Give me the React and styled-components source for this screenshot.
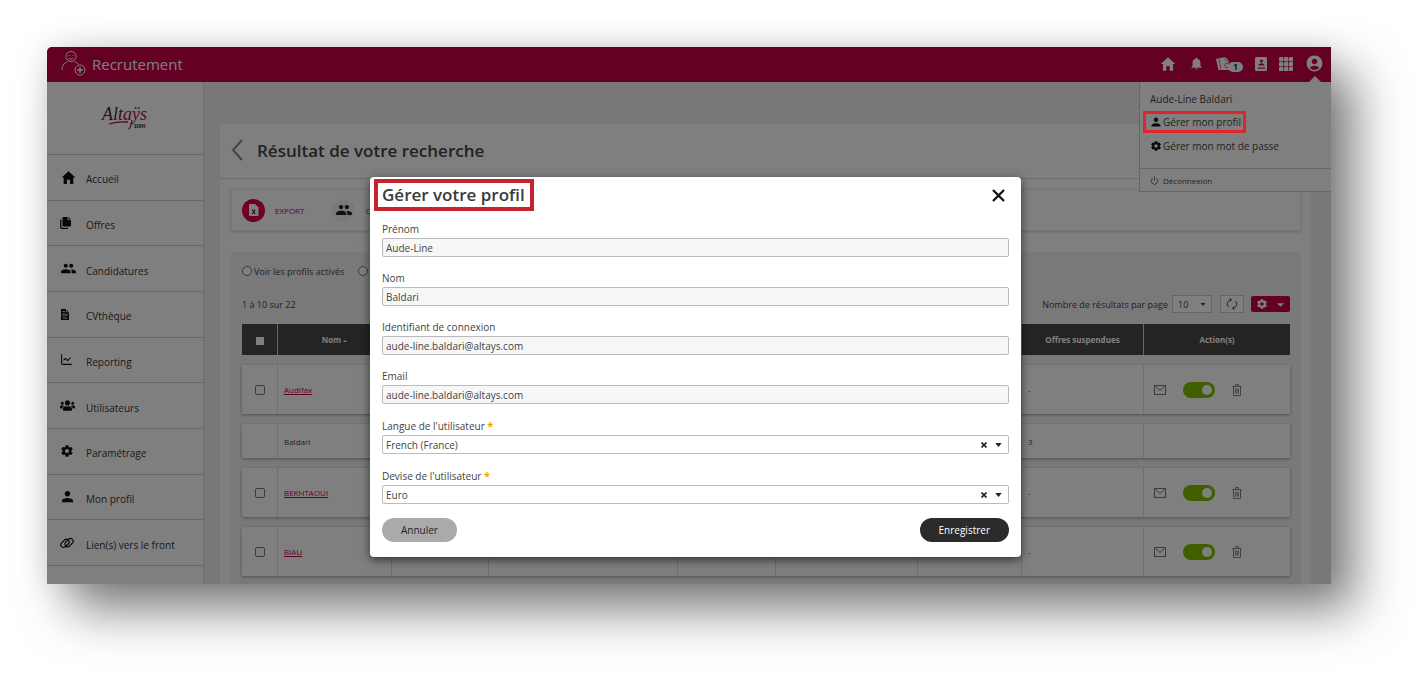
import styled, { createGlobalStyle } from "styled-components";
import {
  IoMdHome,
  IoMdPeople,
  IoMdPerson,
  IoMdSettings,
  IoMdNotifications,
} from "react-icons/io";
import { MdAccountCircle } from "react-icons/md";
import { FaUsers, FaCaretDown } from "react-icons/fa";
import { LuChartLine, LuPower } from "react-icons/lu";

const MENU = [
  { label: "Accueil", icon: <IoMdHome size={17} /> },
  { label: "Offres", icon: <FilesIcon /> },
  { label: "Candidatures", icon: <IoMdPeople size={17} /> },
  { label: "CVthèque", icon: <CvIcon /> },
  { label: "Reporting", icon: <LuChartLine size={13} /> },
  { label: "Utilisateurs", icon: <FaUsers size={15} /> },
  { label: "Paramétrage", icon: <IoMdSettings size={14} /> },
  { label: "Mon profil", icon: <IoMdPerson size={15} /> },
  { label: "Lien(s) vers le front", icon: <ChainIcon /> },
];

const COLUMNS = [35, 114, 97, 189, 98, 142, 104, 122, 147];

const USERS = [
  { name: "Audifax", suspended: "-", editable: true },
  { name: "Baldari", suspended: "3", editable: false },
  { name: "BEKHTAOUI", suspended: "-", editable: true },
  { name: "BIAU", suspended: "-", editable: true },
];

const READONLY_FIELDS = [
  { id: "prenom", label: "Prénom", value: "Aude-Line" },
  { id: "nom", label: "Nom", value: "Baldari" },
  { id: "login", label: "Identifiant de connexion", value: "aude-line.baldari@altays.com" },
  { id: "email", label: "Email", value: "aude-line.baldari@altays.com" },
];

const SELECT_FIELDS = [
  { id: "langue", label: "Langue de l'utilisateur", value: "French (France)" },
  { id: "devise", label: "Devise de l'utilisateur", value: "Euro" },
];

export default function App() {
  return (
    <Page>
      <GlobalStyle />
      <Frame>
        <TopBar />
        <Body>
          <Sidebar />
          <Results />
        </Body>
        <Backdrop>
          <ProfileDialog />
        </Backdrop>
      </Frame>
    </Page>
  );
}

function TopBar() {
  return (
    <Header>
      <RecruitIcon />
      <Brand>Recrutement</Brand>
      <Tools>
        <ToolButton aria-label="Accueil"><IoMdHome size={18} /></ToolButton>
        <ToolButton aria-label="Notifications"><IoMdNotifications size={15} /></ToolButton>
        <ToolButton aria-label="Documents">
          <DocsIcon />
          <Badge>1</Badge>
        </ToolButton>
        <ToolButton aria-label="Annuaire"><BookIcon /></ToolButton>
        <ToolButton aria-label="Applications"><GridIcon /></ToolButton>
        <ToolButton aria-label="Compte" $open><MdAccountCircle size={19} /></ToolButton>
      </Tools>
      <UserMenu>
        <UserName>Aude-Line Baldari</UserName>
        <MenuLink href="#profil"><IoMdPerson size={12} />Gérer mon profil<Outline /></MenuLink>
        <MenuLink href="#mdp"><IoMdSettings size={12} />Gérer mon mot de passe</MenuLink>
        <LogoutLink href="#logout"><LuPower size={9} />Déconnexion</LogoutLink>
      </UserMenu>
    </Header>
  );
}

function Sidebar() {
  return (
    <Side>
      <LogoBox><AltaysLogo /></LogoBox>
      <Nav>
        {MENU.map((item) => (
          <NavLink href="#" key={item.label}>
            <NavIcon>{item.icon}</NavIcon>
            <span>{item.label}</span>
          </NavLink>
        ))}
      </Nav>
    </Side>
  );
}

function Results() {
  return (
    <Main>
      <Panel>
        <PanelHead>
          <BackButton aria-label="Retour">
            <svg width="12" height="22" viewBox="0 0 12 22" fill="none" stroke="currentColor" strokeWidth="2">
              <path d="M11 1 2 11l9 10" />
            </svg>
          </BackButton>
          <h1>Résultat de votre recherche</h1>
        </PanelHead>
        <PanelBody>
          <Toolbar>
            <ToolbarButton>
              <Round $active><ExcelIcon /></Round>
              EXPORT
            </ToolbarButton>
            <ToolbarButton>
              <Round><IoMdPeople size={18} /></Round>
              CRÉER
            </ToolbarButton>
          </Toolbar>
          <ListArea>
            <Filters>
              <label><input type="radio" name="etat" />Voir les profils activés</label>
              <input type="radio" name="etat" aria-label="Voir les profils désactivés" />
            </Filters>
            <ListBar>
              <Count>1 à 10 sur 22</Count>
              <label htmlFor="parPage">Nombre de résultats par page</label>
              <PageSize>
                <select id="parPage" defaultValue="10">
                  <option>10</option>
                </select>
                <FaCaretDown size={8} />
              </PageSize>
              <RefreshButton aria-label="Rafraîchir"><RefreshIcon /></RefreshButton>
              <ConfigButton aria-label="Configurer">
                <IoMdSettings size={12} />
                <FaCaretDown size={11} />
              </ConfigButton>
            </ListBar>
            <UserTable />
          </ListArea>
        </PanelBody>
      </Panel>
    </Main>
  );
}

function UserTable() {
  return (
    <Table>
      <colgroup>
        {COLUMNS.map((width, i) => (
          <col key={i} width={width} />
        ))}
      </colgroup>
      <thead>
        <tr>
          <th><HeadCheck type="checkbox" aria-label="Tout sélectionner" /></th>
          <th>Nom <Sort /></th>
          <th /><th /><th /><th /><th />
          <th>Offres suspendues</th>
          <th>Action(s)</th>
        </tr>
      </thead>
      <tbody>
        {USERS.map((user) => (
          <Row key={user.name} $short={!user.editable}>
            <CheckCell>
              {user.editable && <RowCheck type="checkbox" aria-label={user.name} />}
            </CheckCell>
            <td>{user.editable ? <a href="#">{user.name}</a> : user.name}</td>
            <td /><td /><td /><td /><td />
            <td>{user.suspended}</td>
            <td>
              {user.editable && (
                <Actions>
                  <IconButton aria-label="Envoyer un mail"><MailIcon /></IconButton>
                  <Toggle type="checkbox" role="switch" defaultChecked aria-label="Activé" />
                  <IconButton aria-label="Supprimer"><TrashIcon /></IconButton>
                </Actions>
              )}
            </td>
          </Row>
        ))}
      </tbody>
    </Table>
  );
}

function ProfileDialog() {
  return (
    <Dialog role="dialog" aria-labelledby="dialogTitle">
      <DialogHead>
        <h2 id="dialogTitle">Gérer votre profil</h2>
        <CloseButton aria-label="Fermer">
          <svg width="13" height="13" viewBox="0 0 13 13" stroke="currentColor" strokeWidth="2.4">
            <path d="M1 1l11 11M12 1 1 12" />
          </svg>
        </CloseButton>
      </DialogHead>
      {READONLY_FIELDS.map((field) => (
        <Field key={field.id}>
          <label htmlFor={field.id}>{field.label}</label>
          <input id={field.id} defaultValue={field.value} readOnly />
        </Field>
      ))}
      {SELECT_FIELDS.map((field) => (
        <Field key={field.id} $required>
          <label htmlFor={field.id}>{field.label} <b>*</b></label>
          <SelectBox>
            <select id={field.id} defaultValue={field.value}>
              <option>{field.value}</option>
            </select>
            <ClearButton aria-label="Effacer">
              <svg width="6" height="6" viewBox="0 0 6 6" stroke="currentColor" strokeWidth="1.6">
                <path d="M.5.5l5 5M5.5.5l-5 5" />
              </svg>
            </ClearButton>
            <svg width="7" height="4" viewBox="0 0 8 5" fill="currentColor">
              <path d="M0 0h8L4 5z" />
            </svg>
          </SelectBox>
        </Field>
      ))}
      <DialogFoot>
        <PillButton>Annuler</PillButton>
        <PillButton $primary>Enregistrer</PillButton>
      </DialogFoot>
    </Dialog>
  );
}

/* ---------- icons ---------- */

function RecruitIcon() {
  return (
    <svg width="26" height="27" viewBox="0 0 26 27" fill="none" stroke="currentColor">
      <circle cx="10" cy="6.5" r="5" />
      <path d="M7.6 8a2.8 2.8 0 0 0 4.8 0M8 5v1M12 5v1" />
      <path d="M1 20c0-4 1.5-6.5 5.500-8.500M13.500 11.500c2 .8 3.200 1.700 4 3" />
      <circle cx="19" cy="20" r="5" />
      <path d="M19 17v6M16 20h6" strokeWidth="1.5" />
    </svg>
  );
}

// script wordmark with its underline swash
function AltaysLogo() {
  return (
    <svg width="50" height="32" viewBox="0 0 50 32" role="img" aria-label="Altaÿs SIRH">
      <text x="2" y="18" fontFamily="'Liberation Serif', serif" fontStyle="italic" fontSize="18">
        <tspan fill="#5c2438">Alt</tspan>
        <tspan fill="#a8123c">aÿs</tspan>
      </text>
      <path d="M9 22c6-2 12-2.500 19-2M32 18c-.5 4-1.500 8-3.500 9" fill="none" stroke="#a8123c" strokeWidth="1.3" />
      <text x="34" y="26" fill="#222" fontFamily="'Open Sans', sans-serif" fontWeight="700" fontSize="5">SIRH</text>
    </svg>
  );
}

function FilesIcon() {
  return (
    <svg width="11" height="12" viewBox="0 0 11 12">
      <path d="M3 0h4.500v3H11v5.500a1 1 0 0 1-1 1H3.500a1 1 0 0 1-1-1V.5z" fill="currentColor" />
      <path d="M8.300 0 11 2.300H8.300z" fill="currentColor" />
      <path d="M.8 2.500v8a.8.8 0 0 0 .8.800H8" fill="none" stroke="currentColor" strokeWidth="1.3" />
    </svg>
  );
}

function CvIcon() {
  return (
    <svg width="10" height="13" viewBox="0 0 10 13">
      <path d="M1 1h5l3 3v8H1z" fill="currentColor" />
      <path d="M2.500 3.500h2.500M2.500 10h5M6.500 1v2.800h3" stroke="#fff" strokeWidth=".8" fill="none" />
      <circle cx="4" cy="6.8" r="1.4" fill="none" stroke="#fff" strokeWidth=".7" />
      <path d="M6 5.800l.8 2 .8-2" fill="none" stroke="#fff" strokeWidth=".7" />
    </svg>
  );
}

function ChainIcon() {
  return (
    <svg width="14" height="12" viewBox="0 0 14 12" fill="none" stroke="currentColor" strokeWidth="1.2">
      <rect x=".3" y="3.6" width="9.4" height="5.400" rx="2.7" transform="rotate(-45 5 6.300)" />
      <rect x="4.3" y="3" width="9.4" height="5.4" rx="2.7" transform="rotate(-45 9 5.700)" />
    </svg>
  );
}

function DocsIcon() {
  return (
    <svg width="15" height="14" viewBox="0 0 15 14">
      <path d="M0 2 3.300 1 5 13l-2.500.3z" fill="currentColor" />
      <path d="M3.300 1 9.500.2 12.500 3v3l1.500 2-1 5H5z" fill="currentColor" />
      <path d="M3 1.300 4.800 13M9.300.5v2.700l3 .2" fill="none" stroke="#c80046" strokeWidth=".5" />
      <circle cx="11" cy="8.5" r="2.3" fill="none" stroke="#c80046" strokeWidth=".6" />
    </svg>
  );
}

function BookIcon() {
  return (
    <svg width="12" height="14" viewBox="0 0 12 14">
      <rect x="0" y="0" width="12" height="14" rx="1.5" fill="currentColor" />
      <g fill="#c80046">
        <circle cx="6.5" cy="4" r="1.5" />
        <path d="M3.500 8.500c0-3 6-3 6 0z" />
        <path d="M3 10.500h7v1.200H3z" />
      </g>
    </svg>
  );
}

function GridIcon() {
  return (
    <svg width="14" height="14" viewBox="0 0 14 14" fill="currentColor">
      {[0, 5, 10].map((y) =>
        [0, 5, 10].map((x) => <rect key={`${x}-${y}`} x={x} y={y} width="4.4" height="4.4" rx="1.2" />)
      )}
    </svg>
  );
}

function ExcelIcon() {
  return (
    <svg width="10" height="12" viewBox="0 0 10 12">
      <path d="M1 0h5l3.500 3.500V11a1 1 0 0 1-1 1H1a1 1 0 0 1-1-1V1a1 1 0 0 1 1-1z" fill="#fff" />
      <path d="M3.200 5.500l3 4.500M6.200 5.500l-3 4.500" stroke="#5a1030" strokeWidth="1.1" />
    </svg>
  );
}

function RefreshIcon() {
  return (
    <svg width="12" height="12" viewBox="0 0 12 12" fill="none" stroke="currentColor">
      <path d="M2.500 9A4.500 4.500 0 0 1 5 1.600M3.500.5 5.500 1.600 4.200 3.500M9.500 3A4.500 4.500 0 0 1 7 10.400M8.500 11.500l-2-1.100 1.300-1.900" />
    </svg>
  );
}

function MailIcon() {
  return (
    <svg width="12" height="10" viewBox="0 0 12 10" fill="none" stroke="currentColor">
      <rect x=".5" y=".5" width="11" height="9" />
      <path d="M1.500 1.500 6 5.500l4.500-4" />
    </svg>
  );
}

function TrashIcon() {
  return (
    <svg width="10" height="12" viewBox="0 0 10 12" fill="none" stroke="currentColor" strokeWidth=".9">
      <path d="M.5 2.500h9M3.500 2.500v-2h3v2M1.500 2.500v9h7v-9M3.700 4.500v5M5 4.500v5M6.300 4.500v5" />
    </svg>
  );
}

/* ---------- styles ---------- */

const GlobalStyle = createGlobalStyle`
  * {
    box-sizing: border-box;
  }

  body {
    margin: 0;
    background: #fff;
    color: #444;
    font-family: "Open Sans", "Noto Sans", sans-serif;
    font-size: 9px;
  }

  button, input, select {
    font: inherit;
    color: inherit;
    margin: 0;
  }

  button {
    border: 0;
    padding: 0;
    background: none;
  }

  a {
    color: inherit;
    text-decoration: none;
  }

  svg {
    display: block;
    flex: none;
  }
`;

const Page = styled.div`
  height: 100vh;
  padding: 47px 95px 95px 47px;
  overflow: hidden;
`;

const Frame = styled.div`
  position: relative;
  display: flex;
  flex-direction: column;
  height: 100%;
  border-radius: 5px 0 0 0;
  box-shadow: 24px 26px 50px rgba(0, 0, 0, 0.5), 0 0 30px rgba(0, 0, 0, 0.12);
`;

const Header = styled.header`
  position: relative;
  display: flex;
  flex: none;
  align-items: center;
  height: 35px;
  padding: 0 7px 2px 14px;
  border-radius: 5px 0 0 0;
  background: #c80046;
  color: #fff;
`;

const Brand = styled.div`
  margin-left: 5px;
  font-size: 15px;
`;

const Tools = styled.div`
  display: flex;
  align-items: center;
  gap: 12px;
  margin-left: auto;
`;

const ToolButton = styled.button`
  position: relative;
  display: flex;
  align-items: center;
  height: 33px;

  &::after {
    content: "";
    display: ${(p) => (p.$open ? "block" : "none")};
    position: absolute;
    bottom: -2px;
    left: 50%;
    margin-left: -6px;
    border: 6px solid transparent;
    border-top-width: 0;
    border-bottom-color: #fff;
  }
`;

const Badge = styled.span`
  width: 15px;
  height: 10px;
  margin: 6px 0 0 -3px;
  border-radius: 5px;
  background: #fff;
  color: #222;
  font-size: 8px;
  font-weight: 700;
  line-height: 10px;
  text-align: center;
`;

const UserMenu = styled.div`
  position: absolute;
  top: 100%;
  right: 0;
  width: 192px;
  padding-top: 8px;
  border: 1px solid #ccc;
  border-width: 0 0 1px 1px;
  background: #fff;
  color: #444;
  font-size: 10px;
`;

const UserName = styled.div`
  padding-left: 10px;
  line-height: 18px;
`;

const MenuLink = styled.a`
  position: relative;
  display: flex;
  align-items: center;
  gap: 1px;
  width: fit-content;
  height: 18px;
  margin: 6px 0 0 5px;
  padding: 0 3px 0 5px;

  svg {
    color: #111;
  }

  &:first-of-type {
    margin-top: 5px;
  }
`;

/* stays above the backdrop so the entry keeps its bright frame */
const Outline = styled.span`
  position: absolute;
  z-index: 3;
  inset: -2px;
  border: 3px solid #e0242c;
`;

const LogoutLink = styled.a`
  display: flex;
  align-items: center;
  gap: 4px;
  height: 23px;
  margin-top: 13px;
  padding-left: 10px;
  border-top: 1px solid #ccc;
  font-size: 8px;
`;

const Body = styled.div`
  display: flex;
  flex: 1;
  min-height: 0;
  overflow: hidden;
`;

const Side = styled.aside`
  flex: none;
  width: 157px;
  background: #fff;
  border-right: 1px solid #ddd;
  box-shadow: 1px 0 4px rgba(0, 0, 0, 0.15);
`;

const LogoBox = styled.div`
  display: flex;
  align-items: center;
  justify-content: center;
  height: 73px;
  border-bottom: 1px solid #ccc;
`;

const Nav = styled.nav`
  display: grid;
  grid-auto-rows: 1fr;
  height: 411px;
`;

const NavLink = styled.a`
  display: flex;
  align-items: center;
  padding: 4px 0 0 13px;
  border-bottom: 1px solid #ccc;
  color: #333;
  font-size: 10px;
`;

const NavIcon = styled.span`
  width: 26px;
  padding-bottom: 4px;
  color: #111;
`;

const Main = styled.main`
  flex: 1;
  min-width: 0;
  padding: 42px 20px 0 16px;
  background: #f0f0f0;
`;

const Panel = styled.section`
  min-height: 100%;
  background: #fff;
`;

const PanelHead = styled.div`
  display: flex;
  align-items: center;
  gap: 14px;
  height: 55px;
  padding: 0 0 2px 11px;
  border-bottom: 1px solid #ddd;

  h1 {
    margin: 0;
    font-size: 17px;
    font-weight: 600;
  }
`;

const BackButton = styled.button`
  color: #888;
`;

const PanelBody = styled.div`
  padding: 10px 10px 0 11px;
`;

const Toolbar = styled.div`
  display: flex;
  align-items: center;
  gap: 28px;
  height: 42px;
  padding-left: 10px;
  border: 1px solid #eee;
  box-shadow: 0 1px 3px rgba(0, 0, 0, 0.2);
`;

const ToolbarButton = styled.button`
  display: flex;
  align-items: center;
  gap: 10px;
  color: #c80046;
  font-size: 8px;
`;

const Round = styled.span`
  display: flex;
  align-items: center;
  justify-content: center;
  width: 23px;
  height: 23px;
  border-radius: 50%;
  background: ${(p) => (p.$active ? "#dc0050" : "#f2f2f2")};
  color: #222;
`;

const ListArea = styled.div`
  margin-top: 21px;
  padding: 12px 11px 20px;
  background: #f3f3f3;
`;

const Filters = styled.div`
  display: flex;
  align-items: center;
  gap: 14px;
  height: 14px;

  label {
    display: flex;
    align-items: center;
    gap: 2px;
  }

  input {
    appearance: none;
    width: 10px;
    height: 10px;
    border: 1px solid #777;
    border-radius: 50%;
    background: #fff;
  }
`;

const ListBar = styled.div`
  display: flex;
  align-items: center;
  height: 18px;
  margin-top: 17px;
`;

const Count = styled.span`
  margin-right: auto;
`;

const PageSize = styled.div`
  display: flex;
  align-items: center;
  justify-content: space-between;
  width: 40px;
  height: 18px;
  margin-left: 4px;
  padding: 0 4px 0 5px;
  border: 1px solid #ccc;
  background: #fff;

  select {
    appearance: none;
    border: 0;
    padding: 0;
    background: none;
  }
`;

const RefreshButton = styled.button`
  display: flex;
  align-items: center;
  justify-content: center;
  width: 24px;
  height: 18px;
  margin: 0 7px 0 8px;
  border: 1px solid #ccc;
  background: #fff;
`;

const ConfigButton = styled.button`
  display: flex;
  align-items: center;
  justify-content: center;
  gap: 7px;
  width: 39px;
  height: 16px;
  border-radius: 2px;
  background: #c80046;
  color: #fff;
`;

const Table = styled.table`
  width: 100%;
  margin-top: 1px;
  border-spacing: 0 10px;
  table-layout: fixed;
  font-size: 8px;

  th {
    height: 31px;
    padding: 0;
    border-left: 1px solid #ccc;
    background: #484848;
    color: #fff;
    font-weight: 700;
  }

  th:first-child,
  td:first-child {
    border-left: 0;
  }

  td {
    padding: 0 0 0 6px;
    border-left: 1px solid #ddd;
    background: #fff;
  }

  td a {
    color: #c80046;
    text-decoration: underline;
  }
`;

const Row = styled.tr`
  height: ${(p) => (p.$short ? 34 : 49)}px;
  box-shadow: 0 1px 3px rgba(0, 0, 0, 0.35);
`;

const CheckCell = styled.td`
  && {
    padding: 0;
    text-align: center;
  }
`;

const HeadCheck = styled.input`
  appearance: none;
  width: 8px;
  height: 8px;
  vertical-align: middle;
  background: #fff;
`;

const RowCheck = styled.input`
  appearance: none;
  width: 10px;
  height: 10px;
  vertical-align: middle;
  border: 1px solid #777;
  border-radius: 2px;
`;

const Sort = styled.i`
  display: inline-block;
  vertical-align: middle;
  border: 2px solid transparent;
  border-top-width: 0;
  border-bottom-color: #fff;
`;

const Actions = styled.div`
  display: flex;
  align-items: center;
  gap: 17px;
  padding-left: 4px;
`;

const IconButton = styled.button`
  color: #777;
`;

const Toggle = styled.input`
  appearance: none;
  display: flex;
  align-items: center;
  width: 32px;
  height: 16px;
  padding: 0 3px;
  border-radius: 8px;
  background: #80c000;

  &::before {
    content: "";
    width: 10px;
    height: 10px;
    margin-left: auto;
    border-radius: 50%;
    background: #fff;
  }
`;

const Backdrop = styled.div`
  position: absolute;
  z-index: 2;
  inset: 0;
  display: flex;
  align-items: flex-start;
  padding: 130px 310px 0 323px;
  border-radius: 5px 0 0 0;
  background: rgba(0, 0, 0, 0.5);
`;

const Dialog = styled.div`
  flex: 1;
  padding: 0 12px 15px;
  border-radius: 4px;
  background: #fff;
  box-shadow: 0 3px 10px rgba(0, 0, 0, 0.6);
  font-size: 10px;
`;

const DialogHead = styled.div`
  display: flex;
  align-items: center;
  justify-content: space-between;
  height: 36px;
  margin: 0 0 9px -8px;

  h2 {
    margin: 0;
    padding: 0 5px 0 4px;
    border: 4px solid #c4242e;
    color: #3a3a3a;
    font-size: 17px;
    font-weight: 600;
    line-height: 24px;
  }
`;

const CloseButton = styled.button`
  margin-right: 4px;
  color: #111;
`;

const Field = styled.div`
  display: flex;
  flex-direction: column;
  gap: 1px;
  margin-bottom: 14px;

  label {
    line-height: ${(p) => (p.$required ? 16 : 15)}px;
  }

  b {
    color: #f0a500;
    font-size: 11px;
    line-height: 12px;
  }

  input {
    height: 19px;
    padding: 0 3px;
    border: 1px solid #bbb;
    border-radius: 2px;
    background: #f7f7f7;
    outline: 0;
  }
`;

const SelectBox = styled.div`
  display: flex;
  align-items: center;
  gap: 8px;
  height: 19px;
  padding: 0 6px 0 3px;
  border: 1px solid #bbb;
  border-radius: 2px;
  color: #222;

  select {
    flex: 1;
    appearance: none;
    border: 0;
    padding: 0;
    background: none;
    color: #444;
  }
`;

const ClearButton = styled.button`
  display: flex;
`;

const DialogFoot = styled.div`
  display: flex;
  justify-content: space-between;
`;

const PillButton = styled.button`
  height: 24px;
  padding: 0 19px;
  border-radius: 12px;
  background: ${(p) => (p.$primary ? "#2b2b2b" : "#aaa")};
  color: ${(p) => (p.$primary ? "#fff" : "#222")};
`;
